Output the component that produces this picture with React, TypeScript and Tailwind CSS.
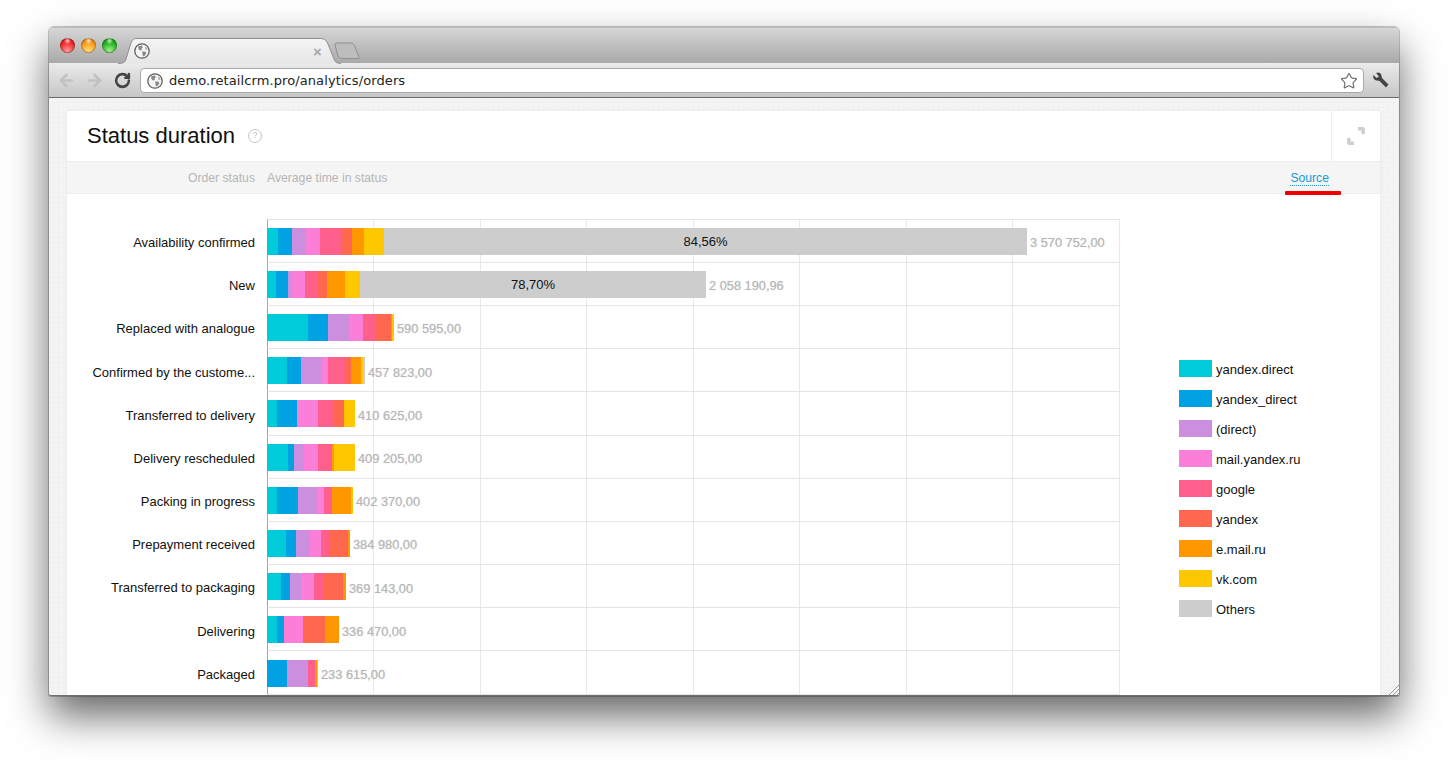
import React from 'react';
import { ArrowLeft, ArrowRight, RotateCw, Star } from 'lucide-react';

const COLORS: Record<string, string> = {
  c: '#00cbdb',
  b: '#00a2e4',
  d: '#cc8fdf',
  m: '#fb7fd9',
  g: '#fe5f8b',
  y: '#ff674f',
  o: '#ff9700',
  v: '#ffc700',
  x: '#cdcdcd',
};

type Row = { label: string; value: string; bars: [string, number][]; pct?: string };

// segment widths in px, read off the reference
const ROWS: Row[] = [
  { label: 'Availability confirmed', value: '3 570 752,00', pct: '84,56%', bars: [['c', 11], ['b', 14], ['d', 14], ['m', 14], ['g', 21], ['y', 11], ['o', 12], ['v', 20], ['x', 643]] },
  { label: 'New', value: '2 058 190,96', pct: '78,70%', bars: [['c', 9], ['b', 12], ['d', 4], ['m', 13], ['g', 13], ['y', 9], ['o', 18], ['v', 15], ['x', 346]] },
  { label: 'Replaced with analogue', value: '590 595,00', bars: [['c', 41], ['b', 20], ['d', 21], ['m', 14], ['g', 12], ['y', 16], ['o', 1], ['v', 2]] },
  { label: 'Confirmed by the custome...', value: '457 823,00', bars: [['c', 20], ['b', 14], ['d', 21], ['m', 6], ['g', 17], ['y', 6], ['o', 10], ['v', 2], ['x', 2]] },
  { label: 'Transferred to delivery', value: '410 625,00', bars: [['c', 10], ['b', 20], ['m', 21], ['g', 15], ['y', 11], ['v', 11]] },
  { label: 'Delivery rescheduled', value: '409 205,00', bars: [['c', 21], ['b', 6], ['d', 10], ['m', 14], ['g', 14], ['o', 2], ['v', 21]] },
  { label: 'Packing in progress', value: '402 370,00', bars: [['c', 10], ['b', 21], ['d', 19], ['m', 7], ['g', 8], ['o', 19], ['v', 2]] },
  { label: 'Prepayment received', value: '384 980,00', bars: [['c', 19], ['b', 10], ['d', 14], ['m', 11], ['g', 8], ['y', 19], ['o', 2]] },
  { label: 'Transferred to packaging', value: '369 143,00', bars: [['c', 14], ['b', 9], ['d', 11], ['m', 13], ['g', 9], ['y', 20], ['o', 3]] },
  { label: 'Delivering', value: '336 470,00', bars: [['c', 10], ['b', 7], ['m', 19], ['y', 22], ['o', 14]] },
  { label: 'Packaged', value: '233 615,00', bars: [['b', 20], ['d', 21], ['g', 7], ['o', 2], ['v', 1]] },
];

const LEGEND: [string, string][] = [
  ['c', 'yandex.direct'],
  ['b', 'yandex_direct'],
  ['d', '(direct)'],
  ['m', 'mail.yandex.ru'],
  ['g', 'google'],
  ['y', 'yandex'],
  ['o', 'e.mail.ru'],
  ['v', 'vk.com'],
  ['x', 'Others'],
];

function Globe() {
  return (
    <svg width="16" height="16" viewBox="0 0 16 16" className="shrink-0">
      <circle cx="8" cy="8" r="7.2" fill="#f4f4f4" stroke="#5f5f5f" strokeWidth="1.3" />
      <path d="M4 3.5 L7.5 2.5 L9 4 L7.5 5.5 L8 7 L6 7.5 L4.5 6 Z" fill="#8a8a8a" />
      <path d="M8 8.5 L11 8.5 L12.5 10 L10.5 13 L9 13.5 L8.5 11 Z" fill="#8a8a8a" />
      <path d="M11 3.5 L13 5 L13.5 7 L11.5 6.5 Z" fill="#a5a5a5" />
    </svg>
  );
}

function TrafficLight({ className }: { className: string }) {
  return <div className={`w-[15px] h-[15px] rounded-full border border-black/25 ${className}`} />;
}

export default function App() {
  return (
    <div className="w-full h-[766px] bg-white pt-[27px] pl-[49px] overflow-hidden font-['Liberation_Sans',Arial,sans-serif]">
      <div className="relative w-[1350px] h-[669px] rounded-t-[5px] rounded-b-[2px] overflow-hidden flex flex-col bg-[#f4f4f4] border-b border-[#6f6f6f] shadow-[0_20px_40px_rgba(0,0,0,0.6),0_0_0_1px_rgba(0,0,0,0.22)]">
        {/* Tab strip */}
        <div className="relative h-[36px] shrink-0 flex items-start gap-[6px] pt-[10px] pl-[11px] bg-gradient-to-b from-[#d6d6d6] to-[#a9a9a9] border-t border-[#bdbdbd]">
          <TrafficLight className="bg-[radial-gradient(circle_at_50%_14%,rgba(255,255,255,0.75),transparent_28%),radial-gradient(circle_at_50%_90%,#ff9d9d,#ee2a2a_60%,#c81818)]" />
          <TrafficLight className="bg-[radial-gradient(circle_at_50%_14%,rgba(255,255,255,0.75),transparent_28%),radial-gradient(circle_at_50%_90%,#ffe27a,#fb9a1c_60%,#e0700c)]" />
          <TrafficLight className="bg-[radial-gradient(circle_at_50%_14%,rgba(255,255,255,0.75),transparent_28%),radial-gradient(circle_at_50%_90%,#a8f08c,#22b422_60%,#0c8a12)]" />
          {/* tab shape */}
          <svg width="320" height="27" viewBox="0 0 320 27" className="absolute left-[66px] top-[9px]">
            <defs>
              <linearGradient id="tab" x1="0" y1="0" x2="0" y2="1">
                <stop offset="0" stopColor="#f5f5f5" />
                <stop offset="1" stopColor="#e6e6e6" />
              </linearGradient>
            </defs>
            <path d="M3 26.500 C8 26.500 10 25.500 11 22 L16 6 C17 2.500 19 1.500 22 1.500 L206 1.500 C209 1.500 211 3 212.500 6 L219 22 C220 25 222 26.500 226 26.500" fill="url(#tab)" stroke="#8f8f8f" />
            <path d="M220 8 C220 6.500 221 6 223 6 L236 6 C238 6 239 7 239.500 8.500 L244 20 C244.500 21 244 21.500 243 21.500 L227 21.500 C225 21.500 224 20.500 223 19 Z" fill="#bdbdbd" stroke="#8f8f8f" />
          </svg>
          <div className="absolute left-[85px] top-[15px]">
            <Globe />
          </div>
          <div className="absolute left-[264px] top-[16px] text-[15px] leading-none font-bold text-[#a9a9a9]">×</div>
        </div>

        {/* Toolbar */}
        <div className="h-[35px] shrink-0 flex items-center pl-[8px] bg-gradient-to-b from-[#ebebeb] to-[#c6c6c6] border-b border-[#6b6b6b]">
          <ArrowLeft size={19} strokeWidth={3.4} className="text-[#c2c2c2]" />
          <ArrowRight size={19} strokeWidth={3.4} className="ml-[9px] text-[#c2c2c2]" />
          <RotateCw size={17} strokeWidth={3.6} className="ml-[10px] text-[#444444]" />
          <div className="ml-[9px] mt-[1px] h-[25px] w-[1224px] flex items-center pl-[6px] pr-[5px] bg-white rounded-[4px] border border-[#a8a8a8]">
            <Globe />
            <span className="ml-[6px] mt-[1px] font-['DejaVu_Sans',sans-serif] text-[13px] text-[#222222] tracking-[0.1px]">demo.retailcrm.pro/analytics/orders</span>
            <Star size={18} strokeWidth={1.6} className="ml-auto text-[#6e6e6e]" />
          </div>
          <svg width="18" height="18" viewBox="0 0 18 18" className="ml-[8px]">
            <path d="M1.500 4 L4.500 7 L7 5.500 L4 2 C6.500 0.500 9.500 2 9.500 5 L10 7 L16.500 13.500 L14 16.500 L7.500 10 L5 9.500 C2.500 9.500 0.500 7 1.500 4 Z" fill="#444444" />
          </svg>
        </div>

        {/* Page */}
        <div className="relative flex-1 min-h-0 px-[18px] pt-[13px] bg-[repeating-linear-gradient(to_right,transparent_0,transparent_4px,#f1f1f1_4px,#f1f1f1_5px),repeating-linear-gradient(to_bottom,transparent_0,transparent_4px,#f1f1f1_4px,#f1f1f1_5px)]">
          <div className="relative w-[1313px] bg-white rounded-t-[2px] h-[900px] shadow-[0_0_3px_rgba(0,0,0,0.08)]">
            <div className="h-[51px] flex items-center justify-between pl-[20px] border-b border-[#ededed]">
              <div className="flex items-center">
                <h1 className="pb-[2px] text-[22px] text-[#111111] font-normal">Status duration</h1>
                <span className="ml-[13px] w-[14px] h-[14px] rounded-full border border-[#c4c4c4] text-[#c4c4c4] text-[9px] flex items-center justify-center">?</span>
              </div>
              <div className="w-[49px] h-full border-l border-[#ededed] flex items-center justify-center">
                <svg width="18" height="18" viewBox="0 0 18 18">
                  <path d="M11 1.800 H16.200 V7 M1.800 11 V16.200 H7" fill="none" stroke="#cfcfcf" strokeWidth="3.5" strokeLinejoin="round" />
                </svg>
              </div>
            </div>

            <div className="h-[32px] pt-[1px] flex items-center bg-[#f5f5f5] border-b border-[#ededed] text-[12.2px] text-[#b5b5b5]">
              <span className="w-[188px] text-right">Order status</span>
              <span className="ml-[12px]">Average time in status</span>
              <span className="ml-auto mr-[51px] text-[#159bd3] border-b border-dotted border-[#159bd3] leading-[14px]">Source</span>
            </div>
            <div className="absolute left-[1218px] top-[80px] w-[56px] h-[4px] rounded-[1px] bg-[#f00000]" />

            {/* Chart and legend */}
            <div className="flex items-start pt-[25px]">
              <div className="w-[1053px] shrink-0">
                {ROWS.map((row, i) => (
                  <div key={row.label} className={`flex ${i === 0 ? 'h-[43.8px]' : 'h-[43.2px]'}`}>
                    <div className="w-[188px] shrink-0 pt-[3px] flex items-center justify-end text-[13px] text-[#111111] whitespace-nowrap">
                      {row.label}
                    </div>
                    <div
                      className={`ml-[12px] flex-1 flex items-center pt-[1px] border-l border-b border-l-[#a8a8a8] border-b-[#e4e4e4] bg-[repeating-linear-gradient(to_right,transparent_0,transparent_105px,#e8e8e8_105px,#e8e8e8_106px,transparent_106px,transparent_212px,#e8e8e8_212px,#e8e8e8_213px)] ${
                        i === 0 ? 'border-t border-t-[#e4e4e4]' : ''
                      }`}
                    >
                      <div className="flex h-[27px] shrink-0 -ml-[1px]">
                        {row.bars.map(([key, w], j) => (
                          <div
                            key={j}
                            className="h-full flex items-center justify-center text-[13px] text-[#111111]"
                            style={{ width: w, backgroundColor: COLORS[key] }}
                          >
                            {key === 'x' && row.pct}
                          </div>
                        ))}
                      </div>
                      <span className="ml-[3px] mt-[3px] text-[12.8px] text-[#b8b8b8] whitespace-nowrap [text-shadow:0_0_1px_rgba(170,170,170,0.6)]">{row.value}</span>
                    </div>
                  </div>
                ))}
              </div>

              <div className="ml-[59px] mt-[141px] flex flex-col gap-[13px]">
                {LEGEND.map(([key, name]) => (
                  <div key={name} className="flex items-center h-[17px]">
                    <div className="w-[33px] h-[17px]" style={{ backgroundColor: COLORS[key] }} />
                    <span className="ml-[4px] mt-[3px] text-[13px] text-[#111111]">{name}</span>
                  </div>
                ))}
              </div>
            </div>
          </div>
        </div>

        {/* Resize grip */}
        <svg width="11" height="11" viewBox="0 0 11 11" className="absolute right-0 bottom-0">
          <path d="M1 11 L11 1 M5 11 L11 5 M9 11 L11 9" stroke="#9a9a9a" strokeWidth="1" />
        </svg>
      </div>
    </div>
  );
}
